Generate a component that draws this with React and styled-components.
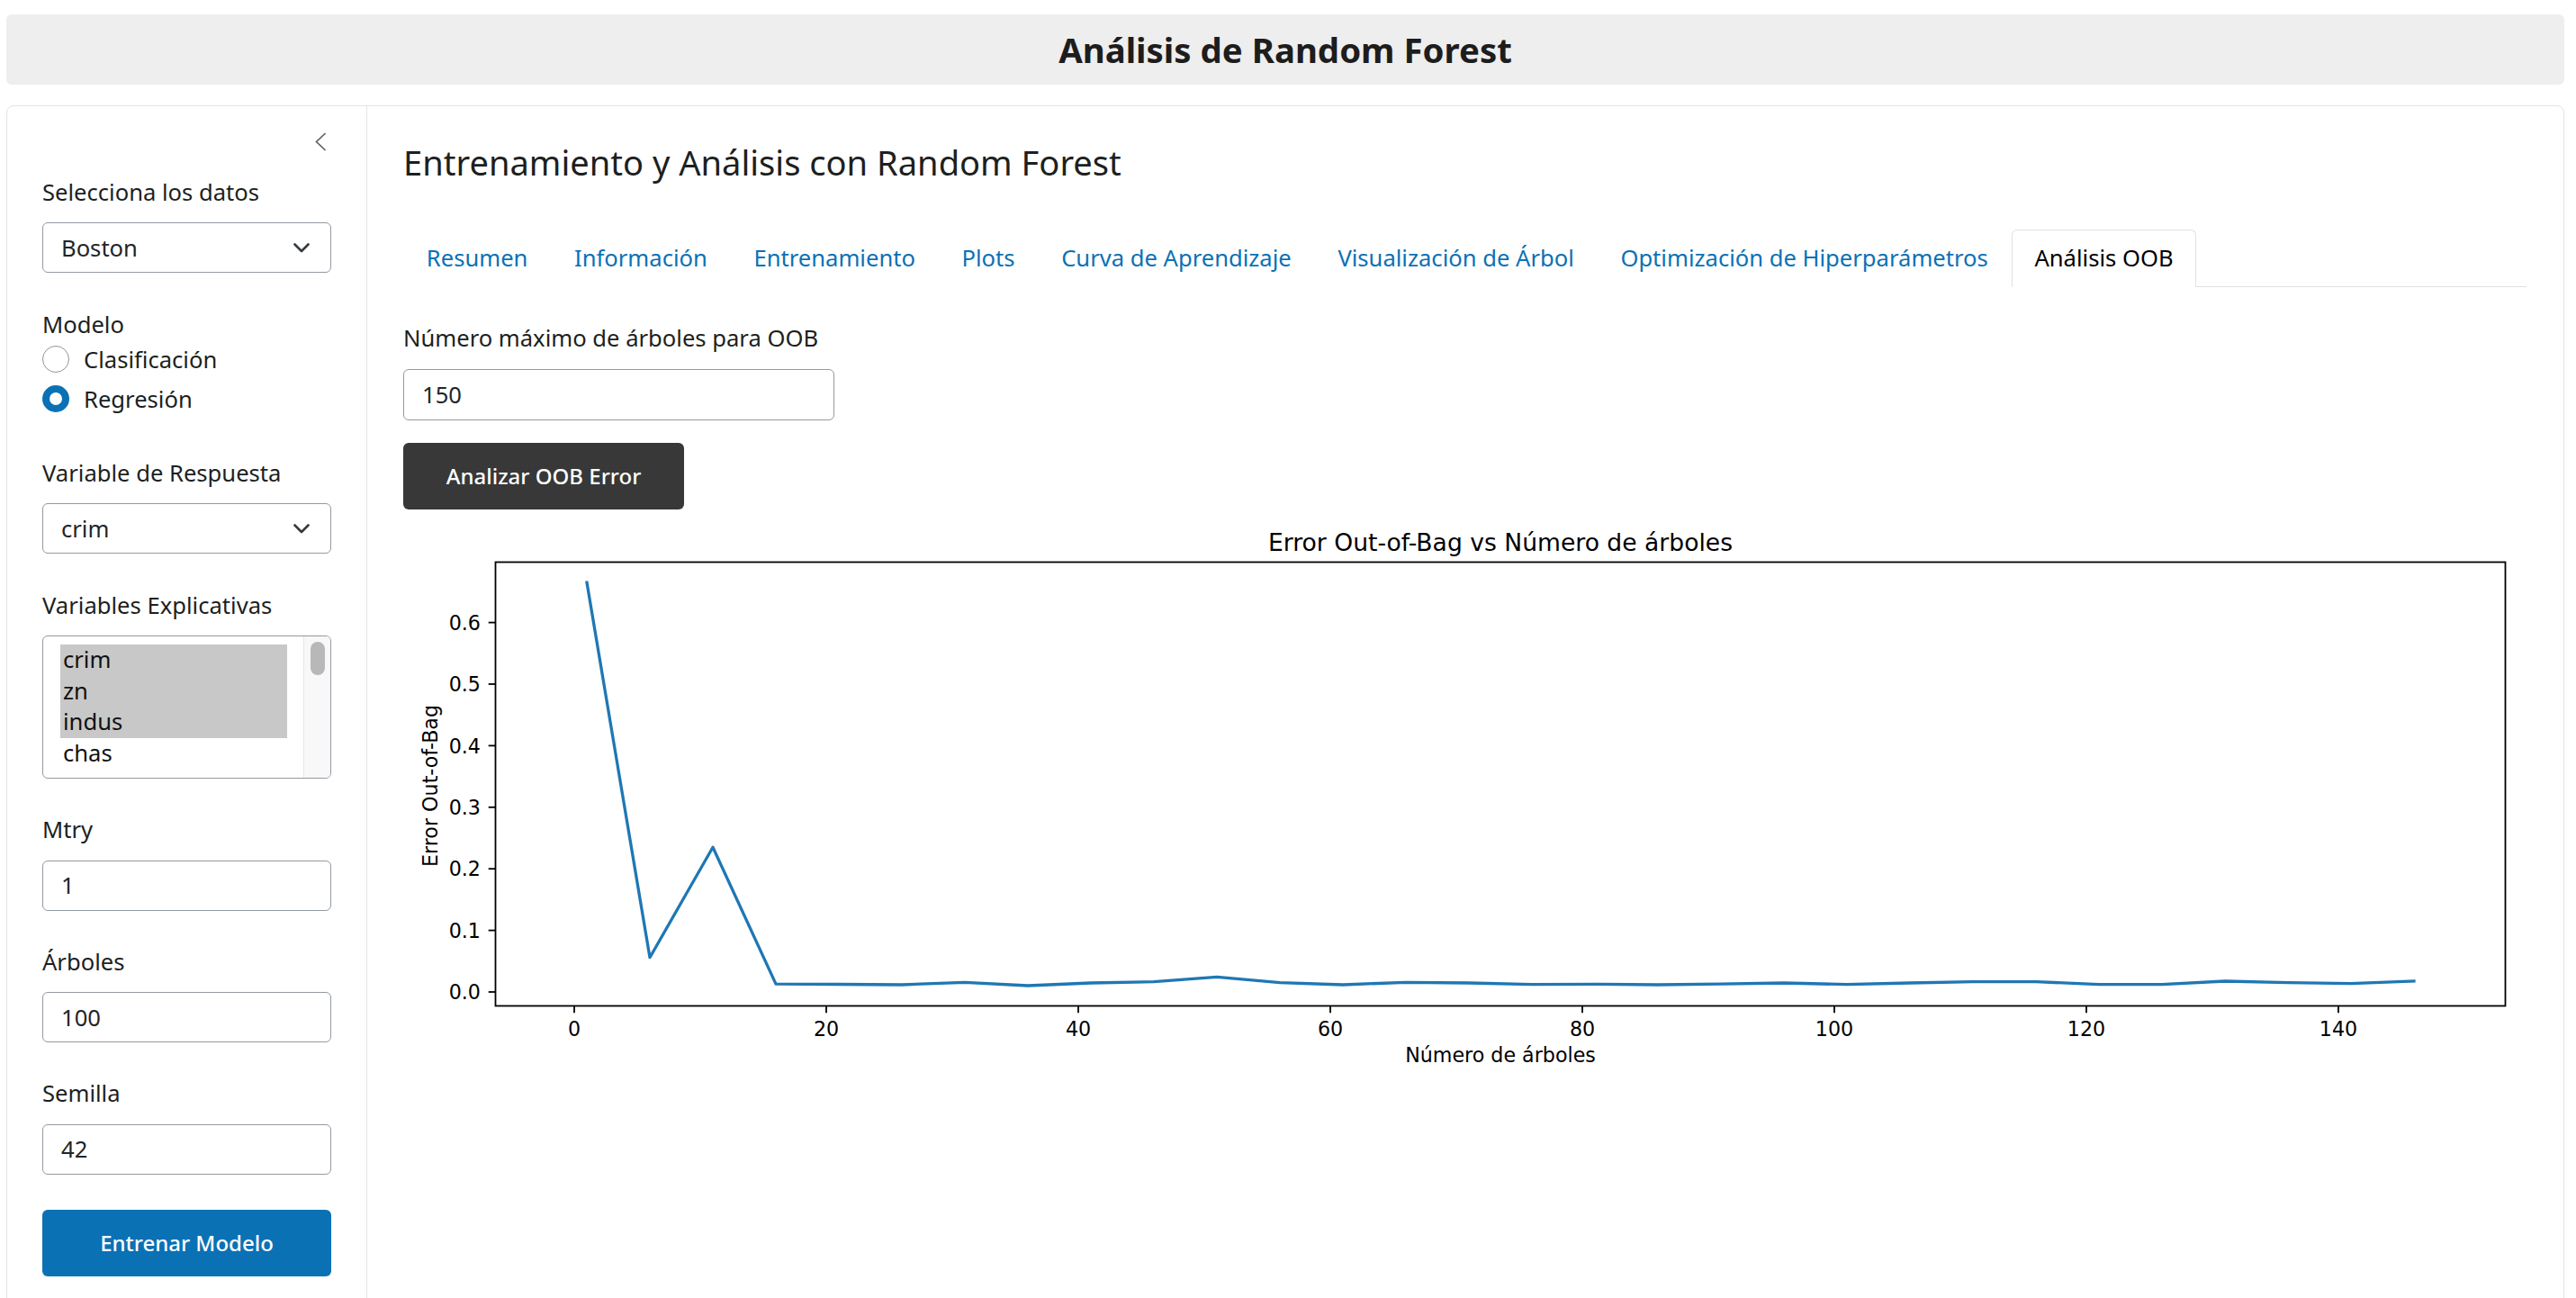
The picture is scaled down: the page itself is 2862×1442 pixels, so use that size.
import React from "react";
import styled, { createGlobalStyle } from "styled-components";

const GlobalStyle = createGlobalStyle`
  html, body {
    margin: 0;
    padding: 0;
    background: #fff;
  }
  body {
    font-family: "Noto Sans", "Open Sans", sans-serif;
    color: #1d1f21;
  }
  * { box-sizing: border-box; }
`;

const BLUE = "#0b71b5";

const Page = styled.div`
  padding: 16px 13px 0 7px;
`;

const TitleBar = styled.header`
  height: 78px;
  background: #eeeeee;
  border-radius: 6px;
  display: flex;
  align-items: center;
  justify-content: center;
`;

const AppTitle = styled.h1`
  margin: 0;
  font-size: 38.4px;
  line-height: 1.2;
  font-weight: 700;
  color: #1d1d1d;
`;

const Card = styled.div`
  margin-top: 23px;
  border: 1px solid #e4e4e4;
  border-radius: 8px;
  display: flex;
  background: #fff;
`;

const Sidebar = styled.aside`
  width: 400px;
  flex-shrink: 0;
  border-right: 1px solid #e4e4e4;
  padding: 29px 39px 40px 39px;
`;

const ToggleRow = styled.div`
  height: 21px;
  display: flex;
  justify-content: flex-end;
  padding-right: 5px;
  margin-bottom: 27px;
`;

const Field = styled.div`
  margin-bottom: ${(p) => (p.gap ? p.gap : "38.2px")};
`;

const Label = styled.div`
  font-size: 25.6px;
  line-height: 38.4px;
  margin-bottom: ${(p) => (p.tight ? "0" : "14px")};
  color: #1d1f21;
`;

const Box = styled.div`
  height: ${(p) => p.h || "56px"};
  width: ${(p) => p.w || "100%"};
  border: 1px solid #939aa1;
  border-radius: 6px;
  display: flex;
  align-items: center;
  justify-content: space-between;
  padding: 0 23px 0 20px;
  font-size: 25.6px;
  color: #212529;
  background: #fff;
`;

const RadioList = styled.div`
  margin-top: -3px;
`;

const RadioRow = styled.label`
  height: 44px;
  display: flex;
  align-items: center;
  gap: 16px;
  font-size: 25.6px;
`;

const RadioDot = styled.span`
  width: 30px;
  height: 30px;
  border-radius: 50%;
  background: #fff;
  border: ${(p) => (p.checked ? `8.5px solid ${BLUE}` : "1px solid #8e959c")};
`;

const ListBox = styled.div`
  height: 159px;
  border: 1px solid #939aa1;
  border-radius: 6px;
  display: flex;
  overflow: hidden;
`;

const Options = styled.div`
  flex: 1;
  padding: 9px 18px 0 19px;
`;

const Option = styled.div`
  height: 34.7px;
  line-height: 34.7px;
  padding-left: 3px;
  font-size: 25.6px;
  color: #111;
  background: ${(p) => (p.selected ? "#c8c8c8" : "transparent")};
`;

const ScrollTrack = styled.div`
  width: 30px;
  background: #f8f8f8;
  border-left: 1px solid #e6e6e6;
  padding: 6px 0 0 7px;
`;

const ScrollThumb = styled.div`
  width: 16px;
  height: 37px;
  border-radius: 8px;
  background: #b8b8b8;
`;

const PrimaryButton = styled.button`
  width: 100%;
  height: 74px;
  border: none;
  border-radius: 6px;
  background: ${BLUE};
  color: #fff;
  font-family: inherit;
  font-size: 24px;
  font-weight: 500;
  margin-top: 1px;
`;

const Main = styled.main`
  flex: 1;
  min-width: 0;
  padding: 39px 41px 40px 40px;
`;

const MainTitle = styled.h2`
  margin: 0 0 52px 0;
  font-size: 38.1px;
  line-height: 46px;
  font-weight: 400;
  color: #1d1f21;
`;

const TabBar = styled.nav`
  display: flex;
  border-bottom: 1px solid #dee2e6;
`;

const Tab = styled.div`
  padding: 12px 24.8px;
  font-size: 25.6px;
  line-height: 38.4px;
  border: 1px solid transparent;
  border-radius: 6px 6px 0 0;
  margin-bottom: -1px;
  color: ${(p) => (p.active ? "#000" : BLUE)};
  background: #fff;
  ${(p) => p.active && "border-color: #dee2e6 #dee2e6 #fff;"}
`;

const TabPane = styled.section`
  padding-top: 38px;
`;

const DarkButton = styled.button`
  height: 74px;
  width: 312px;
  border: none;
  border-radius: 6px;
  background: #383838;
  color: #fff;
  font-family: inherit;
  font-size: 24px;
  font-weight: 500;
  margin-top: 25px;
`;

const ChartSvg = styled.svg`
  display: block;
  margin-top: 14px;
  font-family: "DejaVu Sans", sans-serif;
`;

// flecha del select
const Chevron = () => (
  <svg width="18" height="11" viewBox="0 0 18 11">
    <polyline points="1.5,1.5 9,9 16.5,1.5" fill="none" stroke="#343a40" strokeWidth="2.6" strokeLinecap="round" strokeLinejoin="round" />
  </svg>
);

const CollapseIcon = () => (
  <svg width="13" height="21" viewBox="0 0 13 21">
    <polyline points="11.5,1 1.5,10.5 11.5,20" fill="none" stroke="#5c5c5c" strokeWidth="1.6" />
  </svg>
);

// valores del error OOB (cada 5 arboles)
const oob = [
  [1, 0.665], [6, 0.056], [11, 0.235], [16, 0.013], [21, 0.0125], [26, 0.0117],
  [31, 0.0156], [36, 0.0102], [41, 0.0146], [46, 0.0166], [51, 0.0244], [56, 0.0151],
  [61, 0.0117], [66, 0.0156], [71, 0.0146], [76, 0.0122], [81, 0.0127], [86, 0.0117],
  [91, 0.013], [96, 0.0146], [101, 0.0122], [106, 0.0146], [111, 0.0166], [116, 0.0166],
  [121, 0.0122], [126, 0.0122], [131, 0.0176], [136, 0.015], [141, 0.0136], [146, 0.0176],
];

const X = (v) => 190 + v * 14;
const Y = (v) => 522 - v * 684;

function OobChart() {
  const path = oob.map(([a, b], i) => `${i ? "L" : "M"}${X(a).toFixed(1)},${Y(b).toFixed(1)}`).join(" ");
  const xt = [0, 20, 40, 60, 80, 100, 120, 140];
  const yt = [0, 0.1, 0.2, 0.3, 0.4, 0.5, 0.6];
  return (
    <ChartSvg width="2359" height="620" viewBox="0 0 2359 620">
      <text x="1219" y="32" fontSize="26.6" textAnchor="middle" fill="#000">
        Error Out-of-Bag vs Número de árboles
      </text>
      <path d={path} fill="none" stroke="#1f77b4" strokeWidth="3.3" strokeLinejoin="round" strokeLinecap="square" />
      <rect x="102.5" y="44.5" width="2233" height="493" fill="none" stroke="#000" strokeWidth="1.8" />
      {xt.map((t) => (
        <g key={t}>
          <line x1={X(t)} x2={X(t)} y1="537.5" y2="545.3" stroke="#000" strokeWidth="1.8" />
          <text x={X(t)} y="571" fontSize="22.2" textAnchor="middle" fill="#000">{t}</text>
        </g>
      ))}
      {yt.map((t) => (
        <g key={t}>
          <line x1="94.7" x2="102.5" y1={Y(t)} y2={Y(t)} stroke="#000" strokeWidth="1.8" />
          <text x="86" y={Y(t) + 8.2} fontSize="22.2" textAnchor="end" fill="#000">{t.toFixed(1)}</text>
        </g>
      ))}
      <text x="1219" y="600" fontSize="22.2" textAnchor="middle" fill="#000">Número de árboles</text>
      <text x="38" y="293" fontSize="22.2" textAnchor="middle" fill="#000" transform="rotate(-90 38 293)">
        Error Out-of-Bag
      </text>
    </ChartSvg>
  );
}

const tabs = [
  "Resumen",
  "Información",
  "Entrenamiento",
  "Plots",
  "Curva de Aprendizaje",
  "Visualización de Árbol",
  "Optimización de Hiperparámetros",
  "Análisis OOB",
];

export default function App() {
  return (
    <Page>
      <GlobalStyle />
      <TitleBar>
        <AppTitle>Análisis de Random Forest</AppTitle>
      </TitleBar>

      <Card>
        <Sidebar>
          <ToggleRow>
            <CollapseIcon />
          </ToggleRow>

          <Field>
            <Label>Selecciona los datos</Label>
            <Box>Boston <Chevron /></Box>
          </Field>

          <Field gap="42px">
            <Label tight>Modelo</Label>
            <RadioList>
              <RadioRow><RadioDot />Clasificación</RadioRow>
              <RadioRow><RadioDot checked />Regresión</RadioRow>
            </RadioList>
          </Field>

          <Field>
            <Label>Variable de Respuesta</Label>
            <Box>crim <Chevron /></Box>
          </Field>

          <Field>
            <Label>Variables Explicativas</Label>
            <ListBox>
              <Options>
                <Option selected>crim</Option>
                <Option selected>zn</Option>
                <Option selected>indus</Option>
                <Option>chas</Option>
              </Options>
              <ScrollTrack>
                <ScrollThumb />
              </ScrollTrack>
            </ListBox>
          </Field>

          <Field>
            <Label>Mtry</Label>
            <Box>1</Box>
          </Field>

          <Field>
            <Label>Árboles</Label>
            <Box>100</Box>
          </Field>

          <Field>
            <Label>Semilla</Label>
            <Box>42</Box>
          </Field>

          <PrimaryButton>Entrenar Modelo</PrimaryButton>
        </Sidebar>

        <Main>
          <MainTitle>Entrenamiento y Análisis con Random Forest</MainTitle>
          <TabBar>
            {tabs.map((t) => (
              <Tab key={t} active={t === "Análisis OOB"}>{t}</Tab>
            ))}
          </TabBar>
          <TabPane>
            <Label>Número máximo de árboles para OOB</Label>
            <Box w="479px" h="57px">150</Box>
            <DarkButton>Analizar OOB Error</DarkButton>
            <OobChart />
          </TabPane>
        </Main>
      </Card>
    </Page>
  );
}
